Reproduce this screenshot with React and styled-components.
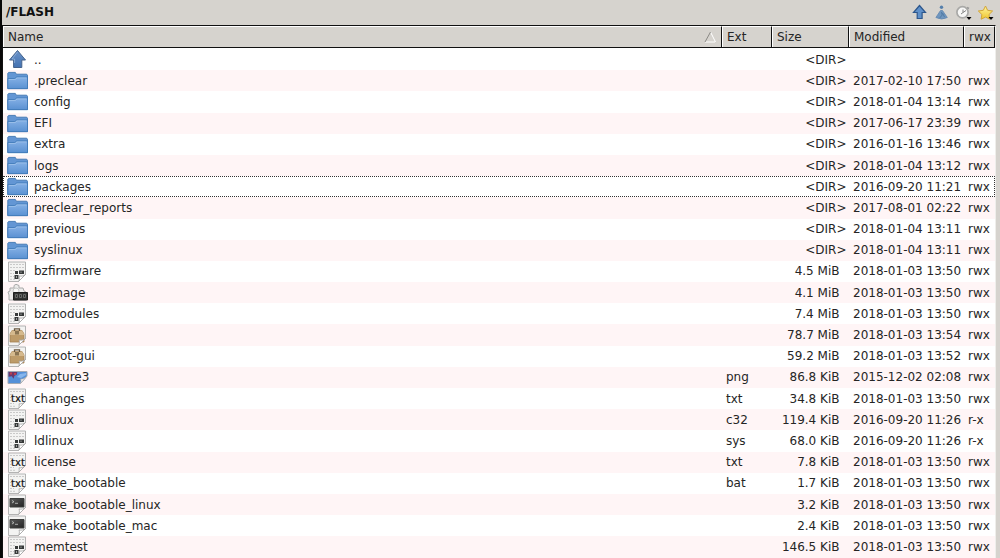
import React from "react";
import styled, { createGlobalStyle } from "styled-components";

const GlobalStyle = createGlobalStyle`
  body { margin: 0; overflow: hidden; background: #d6d3ce; }
  * { box-sizing: border-box; }
`;
const COLUMNS = "719px 50px 77px 115px 31px";

const Window = styled.main`
  width: 1000px;
  height: 558px;
  display: flex;
  flex-direction: column;
  overflow: hidden;
  border-left: 2px solid #080808;
  background: #d6d3ce;
  color: #252525;
  font: 12px "DejaVu Sans", sans-serif;
  white-space: pre;
`;
const PathBar = styled.header`
  height: 25px;
  flex: none;
  display: flex;
  align-items: center;
  justify-content: space-between;
  padding: 0 5px 2px 4px;
`;
const Path = styled.strong`
  font-size: 12px;
  letter-spacing: -0.05px;
  color: #111;
`;
const Tools = styled.div`
  display: flex;
  gap: 4px;
  padding-top: 2px;
  svg { display: block; }
`;
const FileList = styled.section`
  width: 994px;
  height: 533px;
  flex: none;
  border-top: 1px solid #111;
  border-left: 1px solid #111;
  border-right: 1px solid #efeeeb;
  background: #fff;
  overflow: hidden;
`;
const ColumnHeader = styled.div`
  display: grid;
  grid-template-columns: ${COLUMNS};
  height: 22px;
  border-bottom: 1px solid #111;
  background: #d6d3ce;
`;
const HeaderCell = styled.div`
  display: flex;
  align-items: center;
  justify-content: space-between;
  padding: 0 5px 0 4px;
  border-top: 1px solid #fff;
  border-left: 1px solid #fff;
  border-right: 1px solid #111;
`;
const Rows = styled.div`
  padding-top: 1px;
`;
const Row = styled.div`
  display: grid;
  grid-template-columns: ${COLUMNS};
  align-items: center;
  height: 21.2px;
  background: ${({ $tint }) => ($tint ? "#fff5f6" : "#fff")};
  outline: ${({ $focused }) => ($focused ? "1px dotted #333" : "none")};
  outline-offset: -1px;
`;
const NameCell = styled.div`
  display: flex;
  align-items: center;
  gap: 6px;
  padding-left: 4px;
  svg { flex: none; display: block; }
`;
const Cell = styled.div`
  padding-left: 4px;
`;
const SizeCell = styled.div`
  text-align: right;
  padding-right: ${({ $dir }) => ($dir ? 2.5 : 9.5)}px;
`;

const Gradients = () => (
  <svg width="0" height="0" style={{ position: "absolute" }} aria-hidden="true">
    <defs>
      <linearGradient id="folderFill" x1="0" y1="0" x2="0" y2="1">
        <stop offset="0" stopColor="#86b1e6" /><stop offset="1" stopColor="#5a91d2" />
      </linearGradient>
      <linearGradient id="arrowFill" x1="0" y1="0" x2="0" y2="1">
        <stop offset="0" stopColor="#6a92c8" /><stop offset="1" stopColor="#4373b2" />
      </linearGradient>
      <linearGradient id="starFill" x1="0" y1="0" x2="0" y2="1">
        <stop offset="0" stopColor="#fff6a0" /><stop offset="1" stopColor="#efc52d" />
      </linearGradient>
      <linearGradient id="terminalFill" x1="0" y1="0" x2="1" y2="1">
        <stop offset="0" stopColor="#5a5b5b" /><stop offset="1" stopColor="#222" />
      </linearGradient>
    </defs>
  </svg>
);

const Page = ({ ruled }) => (
  <>
    <path d="M1.5 1h17v12.5L11.5 20.5h-10z" fill="#f3f3f2" stroke="#b3b3b3" />
    {ruled && <path d="M3 3.5h14M3 6.5h14M3 9.5h6M3 12.5h4M3 15.5h4M3 18.3h6" stroke="#c9c9c9" strokeDasharray="2 1" />}
  </>
);
const Curl = () => <path d="M11.5 20.5c1-1.7 1.1-3.5.6-5.5 2.4.4 4.6 0 6.4-1.5z" fill="#fff" stroke="#a2a2a2" strokeWidth=".8" />;

const shapes = {
  up: (
    <>
      <path d="M10.5 1.5 18.5 11h-3.7v7.5H6.6V11H2.5z" fill="url(#arrowFill)" stroke="#44638c" />
      <path d="M10.5 3 5 10h2.6v4" fill="none" stroke="#9ab8df" strokeWidth=".7" />
    </>
  ),
  folder: (
    <>
      <path d="M.8 3.2 1.8 2.4h6.5l1 1.8h10.4l.8 1v13.3H.8z" fill="#6396d4" stroke="#3f75b0" strokeWidth=".9" />
      <path d="M.8 8.6h7l1.8-1.6h10.9v11.7H.8z" fill="url(#folderFill)" stroke="#4079b7" strokeWidth=".9" />
      <path d="M1.8 9.5h6.4l1.9-1.6h9.5" fill="none" stroke="#a8c9ee" strokeWidth=".7" />
    </>
  ),
  binary: (
    <>
      <Page ruled />
      <path d="M8 10h3v3H8zM12 9.5h5V13h-5zM7.5 14h4v4h-4z" fill="#363939" />
      <path d="M14 10.5v1.5M9.5 15v2" stroke="#b4b8b7" strokeWidth=".8" />
      <Curl />
    </>
  ),
  image: (
    <>
      <path d="M1 4.5h19v4.5L13.5 16.5H1z" fill="#5590d8" stroke="#a3aab5" />
      <path d="M1.5 5h8.8l-.6 2.7-2.2 1-1 3-1.7-2.5-3.3.6z" fill="#69386c" />
      <path d="M3 5.5h2v2H3zM7 6h2v2H7z" fill="#c1404d" />
      <path d="m10 10 3-3 6-1v2l-5 3z" fill="#86b5ec" />
      <path d="M13.5 16.5c.7-1.6.6-3 .2-4.4 2.4.2 4.5-.9 6.3-3.1z" fill="#f7f9fb" stroke="#aaa" strokeWidth=".8" />
    </>
  ),
  exec: (
    <>
      <path d="M3 6h4V3.5l2-1.2 3 1.2V6h4l1 3 2 1v8H2v-5L1 10l2-1z" fill="#ebebea" stroke="#aaa" />
      <circle cx="9" cy="9" r="3" fill="#f7f7f6" stroke="#c6c6c4" />
      <path d="M6.5 10.5h14V18h-14z" fill="#303231" stroke="#1d1e1d" />
      <path d="M8.5 12.5h2v3h-2zm4 0h2v3h-2zm4 0h2v3h-2z" fill="none" stroke="#757775" strokeWidth=".8" />
    </>
  ),
  archive: (
    <>
      <Page />
      <path d="m3 9 2-3.5h10L17 9v8H3z" fill="#bd9b69" stroke="#a38254" strokeWidth=".8" />
      <path d="m3 9 2-3.5h10L17 9v1H3z" fill="#d5b98d" />
      <path d="M7.5 6V3.8h5V6" fill="none" stroke="#6b5941" strokeWidth="1.3" />
      <path d="M8 6h4v3.5H8z" fill="#8a7452" />
      <Curl />
    </>
  ),
  text: (
    <>
      <Page ruled />
      <path d="M4.5 5h12.5v10H4.5z" fill="#f4f4f2" />
      <path d="M11.5 20.5c.7-1.5.9-3 .5-4.7 2.4.3 4.6-.3 6.5-2.3z" fill="#fff" stroke="#a2a2a2" strokeWidth=".8" />
      <text x="4" y="14" fill="#111" stroke="#111" strokeWidth=".2" fontFamily="DejaVu Sans, sans-serif" fontSize="11" textLength="14" lengthAdjust="spacingAndGlyphs">txt</text>
    </>
  ),
  script: (
    <>
      <Page />
      <path d="M3 4.5h14V13H3z" fill="url(#terminalFill)" stroke="#3d3e3d" />
      <path d="m5 6.5 2 1.2L5 9M8 9.3h3" fill="none" stroke="#c7cac8" strokeWidth=".8" />
      <Curl />
    </>
  )
};
const FileIcon = ({ type }) => <svg width="21" height="21" viewBox="0 0 21 21">{shapes[type]}</svg>;

const ToolIcon = ({ type }) => (
  <svg width="18" height="18" viewBox="0 0 18 18">
    {type === "up" && <path d="M8.5 1.5 14.5 8.5h-3.4v6H6.2v-6H2.5z" fill="#5f90c9" stroke="#2c568c" strokeWidth="1.2" />}
    {type === "root" && (
      <>
        <path d="M7.5 6.5h2l4.8 7q-5.6 3-11.4 0z" fill="#6f96bf" stroke="#6287ae" strokeWidth=".8" />
        <path d="m8.5 8 .7 3-2.5 3M9.5 9l2 4" stroke="#48729c" fill="none" strokeWidth=".8" />
        <circle cx="8.5" cy="3.3" r="1.7" fill="#557fab" />
      </>
    )}
    {type === "history" && (
      <>
        <circle cx="7.5" cy="8.3" r="5.6" fill="#f7f7f6" stroke="#a9a9a7" strokeWidth="1.7" />
        <path d="M8 5.5v3l3-2M8 8.5l-2 1.5" fill="none" stroke="#858585" />
        <path d="m12 3.5 2 1" stroke="#999" strokeWidth="1.5" />
        <path d="M11.5 13h5L14 16z" fill="#050505" />
      </>
    )}
    {type === "star" && (
      <>
        <path d="m8.5 2 2.1 4.3 5 .7-3.6 3.5.8 4.7-4.3-2.1-4.4 2.1.8-4.7L1.3 7l5-.7z" fill="url(#starFill)" stroke="#d2a53a" />
        <path d="M11.5 13h5L14 16z" fill="#050505" />
      </>
    )}
  </svg>
);

const files = [
  ["up", "..", "", "<DIR>", "", ""],
  ["folder", ".preclear", "", "<DIR>", "2017-02-10 17:50", "rwx"],
  ["folder", "config", "", "<DIR>", "2018-01-04 13:14", "rwx"],
  ["folder", "EFI", "", "<DIR>", "2017-06-17 23:39", "rwx"],
  ["folder", "extra", "", "<DIR>", "2016-01-16 13:46", "rwx"],
  ["folder", "logs", "", "<DIR>", "2018-01-04 13:12", "rwx"],
  ["folder", "packages", "", "<DIR>", "2016-09-20 11:21", "rwx"],
  ["folder", "preclear_reports", "", "<DIR>", "2017-08-01 02:22", "rwx"],
  ["folder", "previous", "", "<DIR>", "2018-01-04 13:11", "rwx"],
  ["folder", "syslinux", "", "<DIR>", "2018-01-04 13:11", "rwx"],
  ["binary", "bzfirmware", "", "4.5 MiB", "2018-01-03 13:50", "rwx"],
  ["exec", "bzimage", "", "4.1 MiB", "2018-01-03 13:50", "rwx"],
  ["binary", "bzmodules", "", "7.4 MiB", "2018-01-03 13:50", "rwx"],
  ["archive", "bzroot", "", "78.7 MiB", "2018-01-03 13:54", "rwx"],
  ["archive", "bzroot-gui", "", "59.2 MiB", "2018-01-03 13:52", "rwx"],
  ["image", "Capture3", "png", "86.8 KiB", "2015-12-02 02:08", "rwx"],
  ["text", "changes", "txt", "34.8 KiB", "2018-01-03 13:50", "rwx"],
  ["binary", "ldlinux", "c32", "119.4 KiB", "2016-09-20 11:26", "r-x"],
  ["binary", "ldlinux", "sys", "68.0 KiB", "2016-09-20 11:26", "r-x"],
  ["text", "license", "txt", "7.8 KiB", "2018-01-03 13:50", "rwx"],
  ["text", "make_bootable", "bat", "1.7 KiB", "2018-01-03 13:50", "rwx"],
  ["script", "make_bootable_linux", "", "3.2 KiB", "2018-01-03 13:50", "rwx"],
  ["script", "make_bootable_mac", "", "2.4 KiB", "2018-01-03 13:50", "rwx"],
  ["binary", "memtest", "", "146.5 KiB", "2018-01-03 13:50", "rwx"]
];

export default function App() {
  return (
    <Window>
      <GlobalStyle />
      <Gradients />
      <PathBar>
        <Path>/FLASH</Path>
        <Tools>
          {["up", "root", "history", "star"].map((type) => <ToolIcon key={type} type={type} />)}
        </Tools>
      </PathBar>
      <FileList>
        <ColumnHeader>
          <HeaderCell>
            Name
            <svg width="12" height="12" viewBox="0 0 12 12">
              <path d="M11 11H1" stroke="#fff" />
              <path d="m6.5 1 5 10" stroke="#fff" />
              <path d="M1 11 6.5 1" stroke="#8b8985" />
            </svg>
          </HeaderCell>
          <HeaderCell>Ext</HeaderCell>
          <HeaderCell>Size</HeaderCell>
          <HeaderCell>Modified</HeaderCell>
          <HeaderCell>rwx</HeaderCell>
        </ColumnHeader>
        <Rows>
          {files.map(([type, name, ext, size, modified, mode], i) => (
            <Row key={i} $tint={i % 2 === 1} $focused={name === "packages"}>
              <NameCell><FileIcon type={type} />{name}</NameCell>
              <Cell>{ext}</Cell>
              <SizeCell $dir={size === "<DIR>"}>{size}</SizeCell>
              <Cell>{modified}</Cell>
              <Cell>{mode}</Cell>
            </Row>
          ))}
        </Rows>
      </FileList>
    </Window>
  );
}
